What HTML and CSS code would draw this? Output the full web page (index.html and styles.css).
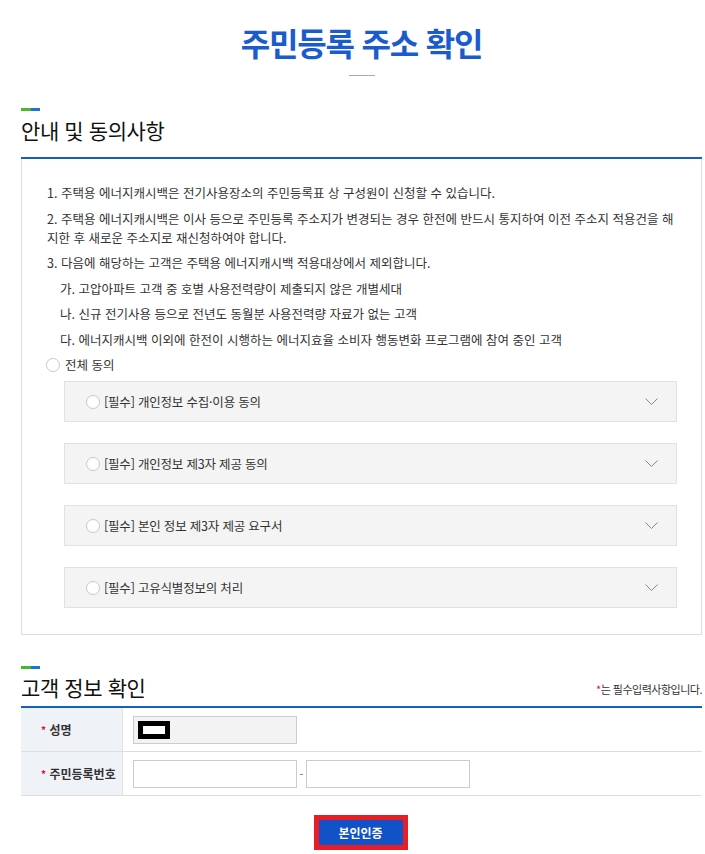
FILE: index.html
```html
<!DOCTYPE html>
<html lang="ko">
<head>
<meta charset="utf-8">
<title>주민등록 주소 확인</title>
<link rel="stylesheet" href="styles.css">
</head>
<body>
<div class="page">
  <h1 class="page-title">주민등록 주소 확인</h1>
  <div class="title-rule"></div>

  <section class="section">
    <div class="sec-bar"><span class="g"></span><span class="b"></span></div>
    <div class="sec-head sec-head-1">
      <h2 class="sec-title">안내 및 동의사항</h2>
    </div>
    <div class="agree-box">
      <p class="notice">1. 주택용 에너지캐시백은 전기사용장소의 주민등록표 상 구성원이 신청할 수 있습니다.</p>
      <p class="notice">2. 주택용 에너지캐시백은 이사 등으로 주민등록 주소지가 변경되는 경우 한전에 반드시 통지하여 이전 주소지 적용건을 해지한 후 새로운 주소지로 재신청하여야 합니다.</p>
      <p class="notice">3. 다음에 해당하는 고객은 주택용 에너지캐시백 적용대상에서 제외합니다.</p>
      <p class="notice sub">가. 고압아파트 고객 중 호별 사용전력량이 제출되지 않은 개별세대</p>
      <p class="notice sub">나. 신규 전기사용 등으로 전년도 동월분 사용전력량 자료가 없는 고객</p>
      <p class="notice sub">다. 에너지캐시백 이외에 한전이 시행하는 에너지효율 소비자 행동변화 프로그램에 참여 중인 고객</p>

      <label class="radio-row all">
        <span class="radio"></span><span>전체 동의</span>
      </label>

      <div class="acc">
        <span class="radio"></span><span class="acc-text">[필수] 개인정보 수집·이용 동의</span>
        <svg class="chev" width="13" height="7" viewBox="0 0 13 7"><path d="M0.5 0.5 L6.5 6.5 L12.5 0.5" fill="none" stroke="#888" stroke-width="1"/></svg>
      </div>
      <div class="acc">
        <span class="radio"></span><span class="acc-text">[필수] 개인정보 제3자 제공 동의</span>
        <svg class="chev" width="13" height="7" viewBox="0 0 13 7"><path d="M0.5 0.5 L6.5 6.5 L12.5 0.5" fill="none" stroke="#888" stroke-width="1"/></svg>
      </div>
      <div class="acc">
        <span class="radio"></span><span class="acc-text">[필수] 본인 정보 제3자 제공 요구서</span>
        <svg class="chev" width="13" height="7" viewBox="0 0 13 7"><path d="M0.5 0.5 L6.5 6.5 L12.5 0.5" fill="none" stroke="#888" stroke-width="1"/></svg>
      </div>
      <div class="acc">
        <span class="radio"></span><span class="acc-text">[필수] 고유식별정보의 처리</span>
        <svg class="chev" width="13" height="7" viewBox="0 0 13 7"><path d="M0.5 0.5 L6.5 6.5 L12.5 0.5" fill="none" stroke="#888" stroke-width="1"/></svg>
      </div>
    </div>
  </section>

  <section class="section section-2">
    <div class="sec-bar"><span class="g"></span><span class="b"></span></div>
    <div class="sec-head sec-head-2">
      <h2 class="sec-title">고객 정보 확인</h2>
      <p class="req-note"><span class="star">*</span>는 필수입력사항입니다.</p>
    </div>
    <div class="info-table">
      <div class="info-row">
        <div class="info-th"><span class="star">*</span>&nbsp;성명</div>
        <div class="info-td">
          <div class="field disabled"><span class="redact"></span></div>
        </div>
      </div>
      <div class="info-row">
        <div class="info-th"><span class="star">*</span>&nbsp;주민등록번호</div>
        <div class="info-td">
          <input class="field" type="text">
          <span class="dash">-</span>
          <input class="field" type="password">
        </div>
      </div>
    </div>
    <div class="btn-row">
      <button class="btn-auth" type="button">본인인증</button>
    </div>
  </section>
</div>
</body>
</html>
```

FILE: styles.css
```css
* { box-sizing: border-box; }
html, body { margin: 0; padding: 0; background: #fff; }
body {
  font-family: "Noto Sans CJK KR", "Noto Sans", sans-serif;
  color: #333;
  font-size: 12px;
}
.page {
  padding: 0 3px 0 21px;
}
.page-title {
  margin: 0;
  padding-top: 17px;
  text-align: center;
  font-size: 32px;
  line-height: 50px;
  font-weight: 700;
  color: #1a5bcd;
  letter-spacing: -1.2px;
}
.title-rule {
  width: 26px;
  height: 1px;
  background: #aaa;
  margin: 8px auto 0;
}
.section { margin-top: 32px; }
.section-2 { margin-top: 31px; }
.sec-bar { display: flex; height: 3px; }
.sec-bar .g { width: 10px; background: #4ab82a; }
.sec-bar .b { width: 9px; background: #1a76d2; }
.sec-head {
  display: flex;
  justify-content: space-between;
  align-items: flex-end;
  border-bottom: 2px solid #1560bd;
}
.sec-head-1 { padding: 6px 0 14px; }
.sec-head-2 { padding: 5px 0 6px; }
.sec-title {
  margin: 0;
  font-size: 21px;
  line-height: 26px;
  font-weight: 400;
  color: #111;
  letter-spacing: -0.4px;
}
.req-note {
  margin: 0 0 4px;
  font-size: 11px;
  line-height: 14px;
  color: #333;
  letter-spacing: -0.5px;
}
.star { color: #e0102c; }

.agree-box {
  border: 1px solid #ddd;
  border-top: 0;
  padding: 24px 24px 26px 25px;
}
.notice {
  margin: 0 0 6.5px;
  font-size: 12.5px;
  line-height: 19px;
  color: #333;
  letter-spacing: 0;
  word-break: break-all;
}
.notice.sub { padding-left: 13px; }

.radio {
  display: inline-block;
  width: 14px;
  height: 14px;
  border-radius: 50%;
  border: 1px solid #c8c8c8;
  background: #fff;
  flex: none;
}
.radio-row {
  display: flex;
  align-items: center;
  gap: 5px;
  margin-top: 3px;
  line-height: 20px;
  font-size: 12.5px;
  color: #333;
  margin-left: -1px;
}
.acc {
  display: flex;
  align-items: center;
  height: 41px;
  margin: 6px 0 21px 17px;
  padding: 0 18px 0 21px;
  background: #f4f4f4;
  border: 1px solid #e2e2e2;
  color: #333;
}
.acc + .acc { margin-top: 0; }
.acc:last-child { margin-bottom: 0; }
.acc .radio { margin-right: 4px; }
.acc-text { flex: 1; font-size: 12.5px; letter-spacing: -0.2px; }
.chev { display: block; }

.info-row {
  display: grid;
  grid-template-columns: 102px 1fr;
  height: 44px;
  border-bottom: 1px solid #ddd;
}
.info-th {
  display: flex;
  align-items: center;
  background: #eff2f6;
  border-right: 1px solid #e2e2e2;
  padding-left: 20px;
  font-size: 12px;
  font-weight: 700;
  color: #333;
  white-space: nowrap;
}
.info-th .star { font-size: 10px; }
.info-td {
  display: flex;
  align-items: center;
  padding: 0 10px;
}
.field {
  display: block;
  width: 164px;
  height: 28px;
  border: 1px solid #ccc;
  background: #fff;
  margin: 0;
  padding: 0 4px;
  font: inherit;
}
.field.disabled {
  background: #f3f3f3;
  display: flex;
  align-items: center;
}
.redact {
  display: block;
  width: 32px;
  height: 18px;
  border: 5px solid #000;
  background: #fff;
}
.dash {
  width: 9px;
  text-align: center;
  color: #666;
  font-size: 11px;
}
.btn-row {
  display: flex;
  justify-content: center;
  padding: 19px 0 0;
}
.btn-auth {
  width: 94px;
  height: 35px;
  border: 5px solid #ea1c24;
  background: #1152c8;
  color: #fff;
  font-family: inherit;
  font-size: 12px;
  font-weight: 700;
  padding: 0;
  margin-left: -2px;
}
```
